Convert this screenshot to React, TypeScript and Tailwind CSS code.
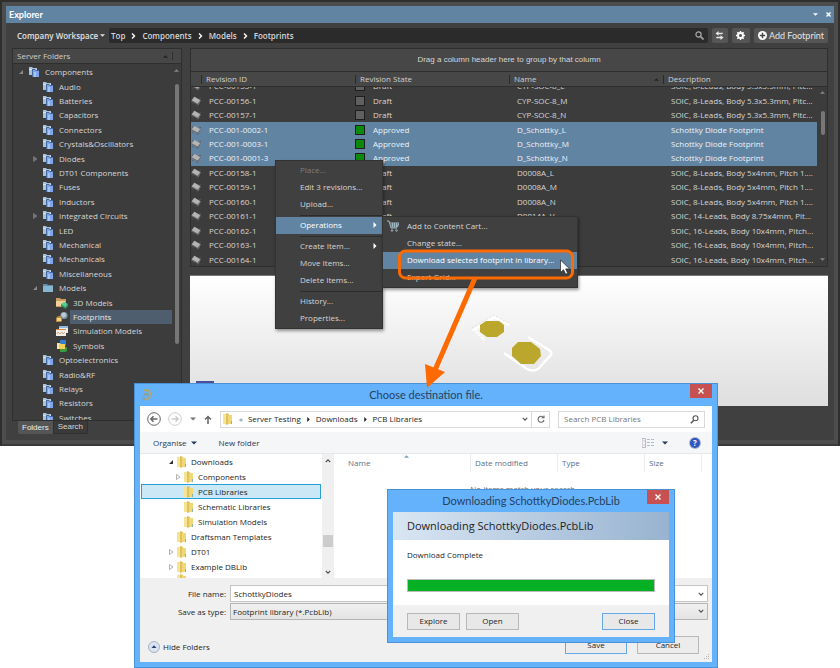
import { useEffect, useRef, useState } from 'react';

type TreeNode = { label: string; level: number; icon: string; arrow?: 'open' | 'closed' };

const serverTree: TreeNode[] = [
  { label: 'Components', level: 0, icon: 'lib', arrow: 'open' },
  { label: 'Audio', level: 1, icon: 'lib' },
  { label: 'Batteries', level: 1, icon: 'lib' },
  { label: 'Capacitors', level: 1, icon: 'lib' },
  { label: 'Connectors', level: 1, icon: 'lib' },
  { label: 'Crystals&Oscillators', level: 1, icon: 'lib' },
  { label: 'Diodes', level: 1, icon: 'lib', arrow: 'closed' },
  { label: 'DT01 Components', level: 1, icon: 'lib' },
  { label: 'Fuses', level: 1, icon: 'lib' },
  { label: 'Inductors', level: 1, icon: 'lib' },
  { label: 'Integrated Circuits', level: 1, icon: 'lib', arrow: 'closed' },
  { label: 'LED', level: 1, icon: 'lib' },
  { label: 'Mechanical', level: 1, icon: 'lib' },
  { label: 'Mechanicals', level: 1, icon: 'lib' },
  { label: 'Miscellaneous', level: 1, icon: 'lib' },
  { label: 'Models', level: 1, icon: 'folder', arrow: 'open' },
  { label: '3D Models', level: 2, icon: 'model3d' },
  { label: 'Footprints', level: 2, icon: 'footprint' },
  { label: 'Simulation Models', level: 2, icon: 'sim' },
  { label: 'Symbols', level: 2, icon: 'symbol' },
  { label: 'Optoelectronics', level: 1, icon: 'lib' },
  { label: 'Radio&RF', level: 1, icon: 'lib' },
  { label: 'Relays', level: 1, icon: 'lib' },
  { label: 'Resistors', level: 1, icon: 'lib' },
  { label: 'Switches', level: 1, icon: 'lib' },
];

const indents = ['pl-1', 'pl-[18px]', 'pl-8'];

const revisions = [
  ['PCC-00155-1', 'Draft', 'CYP-SOC-8_L', 'SOIC, 8-Leads, Body 5.3x5.3mm, Pitc...'],
  ['PCC-00156-1', 'Draft', 'CYP-SOC-8_M', 'SOIC, 8-Leads, Body 5.3x5.3mm, Pitc...'],
  ['PCC-00157-1', 'Draft', 'CYP-SOC-8_N', 'SOIC, 8-Leads, Body 5.3x5.3mm, Pitc...'],
  ['PCC-001-0002-1', 'Approved', 'D_Schottky_L', 'Schottky Diode Footprint'],
  ['PCC-001-0003-1', 'Approved', 'D_Schottky_M', 'Schottky Diode Footprint'],
  ['PCC-001-0001-3', 'Approved', 'D_Schottky_N', 'Schottky Diode Footprint'],
  ['PCC-00158-1', 'Draft', 'D0008A_L', 'SOIC, 8-Leads, Body 5x4mm, Pitch 1....'],
  ['PCC-00159-1', 'Draft', 'D0008A_M', 'SOIC, 8-Leads, Body 5x4mm, Pitch 1....'],
  ['PCC-00160-1', 'Draft', 'D0008A_N', 'SOIC, 8-Leads, Body 5x4mm, Pitch 1....'],
  ['PCC-00161-1', 'Draft', 'D0014A_V', 'SOIC, 14-Leads, Body 8.75x4mm, Pit...'],
  ['PCC-00162-1', 'Draft', 'D0016A_L', 'SOIC, 16-Leads, Body 10x4mm, Pitch...'],
  ['PCC-00163-1', 'Draft', 'D0016A_M', 'SOIC, 16-Leads, Body 10x4mm, Pitch...'],
  ['PCC-00164-1', 'Draft', 'D0016A_N', 'SOIC, 16-Leads, Body 10x4mm, Pitch...'],
];

const diskTree: TreeNode[] = [
  { label: 'Downloads', level: 0, icon: 'win', arrow: 'open' },
  { label: 'Components', level: 1, icon: 'win', arrow: 'closed' },
  { label: 'PCB Libraries', level: 1, icon: 'win' },
  { label: 'Schematic Libraries', level: 1, icon: 'win' },
  { label: 'Simulation Models', level: 1, icon: 'win' },
  { label: 'Draftsman Templates', level: 0, icon: 'win' },
  { label: 'DT01', level: 0, icon: 'win', arrow: 'closed' },
  { label: 'Example DBLib', level: 0, icon: 'win', arrow: 'closed' },
];

function NodeIcon({ name }: { name: string }) {
  if (name === 'lib') {
    return (
      <svg className="w-3 h-3 shrink-0" viewBox="0 0 12 12">
        <path d="M1 1h3l1 1h4v7H1z" fill="#a9c3d9" />
        <path d="M1 3h8v1H1z" fill="#d7e4ee" />
        <path d="M4 3h3l1 1h3v7H4z" fill="#46699f" />
        <path d="M5 4h2l1 1h3v6H5z" fill="#7fa6ea" />
        <path d="M6 6h2v5H6z" fill="#a7c4f7" />
      </svg>
    );
  }
  if (name === 'folder') {
    return (
      <svg className="w-3 h-3 shrink-0" viewBox="0 0 12 12">
        <path d="M1 2h4l1 1h5v7H1z" fill="#5f8fac" />
        <path d="M1 4h10v6H1z" fill="#86b6d0" />
      </svg>
    );
  }
  if (name === 'model3d') {
    return (
      <svg className="w-3 h-3 shrink-0" viewBox="0 0 12 12">
        <path d="M0 1h4l1 1h5v8H0z" fill="#c99d5c" />
        <path d="M0 4h9v5H0z" fill="#f0d19b" />
        <path d="M5 7l3-2 4 2-3 3z" fill="#4fcf93" />
        <path d="M5 7l4 3v2L5 9z" fill="#1f8a58" />
        <path d="M9 10l3-3v2l-3 3z" fill="#2ea86c" />
      </svg>
    );
  }
  if (name === 'footprint') {
    return (
      <svg className="w-3 h-3 shrink-0" viewBox="0 0 12 12">
        <circle cx="8" cy="4.5" r="3.6" fill="#8298a8" />
        <circle cx="7.6" cy="4" r="2.4" fill="#bccad4" />
        <path d="M0 7l2-2h4v5l-1 1H0z" fill="#b28a3d" />
        <path d="M1 7h4v3H1z" fill="#f2d283" />
      </svg>
    );
  }
  if (name === 'sim') {
    return (
      <svg className="w-3 h-3 shrink-0" viewBox="0 0 12 12">
        <path d="M3 1h9v7H3z" fill="#e9eef2" />
        <path d="M3 1h9v2H3z" fill="#8fb9da" />
        <path d="M0 4h10v7H0z" fill="#f4efe6" />
        <path d="M0 4h10v1H0z" fill="#d8873b" />
        <path d="M1 9l1-2 2 2 2-2 1 2 2-2" stroke="#c39a72" strokeWidth=".8" fill="none" />
      </svg>
    );
  }
  if (name === 'symbol') {
    return (
      <svg className="w-3 h-3 shrink-0" viewBox="0 0 12 12">
        <path d="M4 0h6v6H4z" fill="#2f7fd6" />
        <path d="M4 7h7v4l-2 1H4z" fill="#3f9a3b" />
        <path d="M1 3h3l1 1h4v5H1z" fill="#f3cf5e" />
        <path d="M1 3h2v6H1z" fill="#fbe6a0" />
      </svg>
    );
  }
  return (
    <svg className="w-3 h-3 shrink-0" viewBox="0 0 12 12">
      <path d="M1 1h4v10H1z" fill="#f6e393" />
      <path d="M4 0l3 1v10l-3 1z" fill="#dfc25a" />
      <path d="M6 2h4v9H6z" fill="#f0d777" />
      <path d="M9 8h1v3H9z" fill="#8fb3a0" />
    </svg>
  );
}

function ExpandArrow({ arrow, light }: { arrow?: 'open' | 'closed'; light?: boolean }) {
  const stroke = light ? '#a0a0a0' : '#777';
  return (
    <svg className="w-2 h-2 shrink-0" viewBox="0 0 8 8">
      {arrow === 'open' && <path d="M6 2v4H2z" fill={light ? '#333' : '#8a8a8a'} />}
      {arrow === 'closed' && <path d="M2.500 1.500v5L6 4z" fill={light ? '#fff' : '#777'} stroke={stroke} strokeWidth=".8" />}
    </svg>
  );
}

function Triangle({ dir, className }: { dir: 'up' | 'down' | 'right'; className: string }) {
  const d = dir === 'up' ? 'M0 6l4-4 4 4z' : dir === 'down' ? 'M0 2l4 4 4-4z' : 'M2 0l4 4-4 4z';
  return (
    <svg className={className} viewBox="0 0 8 8" fill="currentColor">
      <path d={d} />
    </svg>
  );
}

function Chevron({ className }: { className: string }) {
  return (
    <svg className={className} viewBox="0 0 8 8" fill="none" stroke="currentColor" strokeWidth="1.6">
      <path d="M1 2.500l3 3 3-3" />
    </svg>
  );
}

function ChipIcon() {
  return (
    <svg className="w-[10px] h-[10px]" viewBox="0 0 12 12">
      <path d="M4 1l8 4-3 6-9-5z" fill="#6f6f6f" />
      <path d="M4 1l7 4-3 4-7-4z" fill="#b4b4b4" />
      <path d="M3 1l-1 2M1 8l2 2M10 3l2 0M8 10l-1 2" stroke="#555" />
    </svg>
  );
}

function Explorer() {
  const [activeFolder, setActiveFolder] = useState('Footprints');
  const gridRef = useRef<HTMLDivElement>(null);

  // The grid starts half a row down
  useEffect(() => {
    if (gridRef.current) gridRef.current.scrollTop = 8;
  }, []);

  return (
    <section className="bg-[#4d4d4d] border-2 border-[#2f2f2f] border-b-[#3a3a3a] p-1 text-[8px] leading-3 text-[#d6d6d6]">
      <header className="h-[17px] bg-[#6284a3] flex items-center justify-between px-[3px] text-white">
        <h1 className="text-[9px] font-bold font-[Lato,sans-serif]">Explorer</h1>
        <div className="flex items-center gap-2">
          <button aria-label="Window options"><Triangle dir="down" className="w-[5px] h-[5px]" /></button>
          <button aria-label="Close panel">
            <svg className="w-[5px] h-[5px]" viewBox="0 0 5 5" stroke="white" strokeWidth="1.4"><path d="M.5.5l4 4M4.500.5l-4 4" /></svg>
          </button>
        </div>
      </header>

      <div className="bg-[#404040] px-[6px] pb-[6px]">
        <div className="h-[25px] flex items-center gap-1">
          <button className="w-[93px] pl-[5px] flex items-center gap-[2px] font-semibold text-[#e0e0e0] whitespace-nowrap">
            Company Workspace <Triangle dir="down" className="w-[5px] h-[5px] shrink-0" />
          </button>
          <nav className="flex-1 h-[15px] rounded-xs bg-[#2b2b2b] flex items-center gap-[6px] pl-[2px] pr-1 font-semibold text-[#d6d6d6]">
            <a href="#top">Top</a>
            <Crumb />
            <a href="#components">Components</a>
            <Crumb />
            <a href="#models">Models</a>
            <Crumb />
            <a href="#footprints">Footprints</a>
            <button aria-label="Search" className="ml-auto">
              <svg className="w-[9px] h-[9px]" viewBox="0 0 9 9" fill="none" stroke="#a8a8a8"><circle cx="3.500" cy="3.500" r="2.600" strokeWidth="1.200" /><path d="M5.500 5.500l3 3" strokeWidth="1.700" /></svg>
            </button>
          </nav>
          <button aria-label="Refresh" className="w-4 h-[15px] rounded-xs bg-[#555] flex items-center justify-center">
            <svg className="w-[9px] h-[9px]" viewBox="0 0 9 9" fill="#e8e8e8"><path d="M3.500 0L.5 2.500l3 2.200V3.200h3.700l1-1.500H3.500zM5.500 4.300v1.500H1.800l-1 1.500h4.700V9l3-2.400z" /></svg>
          </button>
          <button aria-label="Settings" className="w-[18px] h-[15px] rounded-xs bg-[#555] flex items-center justify-center">
            <svg className="w-[9px] h-[9px]" viewBox="0 0 10 10" fill="none" stroke="#fff"><circle cx="5" cy="5" r="2.800" strokeWidth="2" /><path d="M5 0v2M5 8v2M0 5h2M8 5h2M1.500 1.500l1.400 1.400M7.100 7.100l1.400 1.400M8.500 1.500L7.100 2.900M2.900 7.100L1.500 8.500" strokeWidth="1.600" /></svg>
          </button>
          <button className="h-[15px] px-1 rounded-xs bg-[#555] flex items-center gap-[2px] text-[#e4e4e4] text-[9px] font-[Lato,sans-serif] whitespace-nowrap">
            <svg className="w-[9px] h-[9px]" viewBox="0 0 10 10"><circle cx="5" cy="5" r="5" fill="#fff" /><path d="M5 2v6M2 5h6" stroke="#444" strokeWidth="1.600" /></svg>
            Add Footprint
          </button>
        </div>

        <div className="flex gap-2">
          <aside className="w-[170px] shrink-0">
            <div className="border border-[#2e2e2e] bg-[#3c3c3c]">
              <div className="h-[15px] bg-[#474747] border-b border-[#2e2e2e] flex items-center px-1 text-[#d0d0d0]">
                Server Folders
                <Triangle dir="up" className="w-[5px] h-[5px] ml-auto text-[#222]" />
                <span className="w-px h-2 bg-[#2e2e2e] ml-1 mr-1" />
              </div>
              <div className="h-[356px] flex overflow-hidden">
                <ul className="flex-1 h-[361px] grid auto-rows-fr pt-px">
                  {serverTree.map((node) => (
                    <li key={node.label} className={`flex items-center ${indents[node.level]}`}>
                      <ExpandArrow arrow={node.arrow} />
                      <span className="w-[3px] shrink-0" />
                      <NodeIcon name={node.icon} />
                      <button
                        onClick={() => setActiveFolder(node.label)}
                        className={`flex-1 h-full ml-[2px] pl-[3px] text-left whitespace-nowrap ${activeFolder === node.label ? 'bg-[#4f5e6f] text-[#e6e6e6]' : ''}`}
                      >
                        {node.label}
                      </button>
                    </li>
                  ))}
                </ul>
                <div className="w-[9px] flex flex-col items-center pt-1">
                  <Triangle dir="up" className="w-[5px] h-[5px] text-[#888]" />
                  <span className="mt-[11px] w-1 h-[260px] rounded-full bg-[#777]" />
                </div>
              </div>
            </div>
            <div className="flex px-[6px] font-['Liberation_Sans',sans-serif]">
              <button className="h-[13px] px-1 bg-[#555] rounded-b-xs text-[#eee] flex items-center">Folders</button>
              <button className="h-[13px] px-1 bg-[#3a3a3a] border border-t-0 border-[#303030] rounded-b-xs flex items-center">Search</button>
            </div>
          </aside>

          <div className="flex-1 min-w-0">
            <div className="border border-[#2e2e2e] bg-[#3c3c3c]">
              <div className="h-[23px] bg-[#474747] border-b border-[#2e2e2e] flex items-center justify-center font-['Liberation_Sans',sans-serif]">
                Drag a column header here to group by that column
              </div>
              <div className="relative">
                <div ref={gridRef} className="h-[194px] overflow-hidden">
                  <table className="w-full h-[203px] table-fixed border-separate border-spacing-0 text-left">
                    <thead className="sticky top-0 z-10">
                      <tr className="h-[15px] bg-[#474747] text-[#d0d0d0]">
                        <th className="w-[10px] p-0 border-b border-[#2e2e2e]" />
                        <HeadCell className="w-[154px]">Revision ID</HeadCell>
                        <HeadCell className="w-[154px]">Revision State</HeadCell>
                        <HeadCell className="w-[154px]" sorted>Name</HeadCell>
                        <HeadCell className="w-auto">Description</HeadCell>
                        <th className="w-[10px] p-0 border-b border-[#2e2e2e] bg-[#474747]" />
                      </tr>
                    </thead>
                    <tbody>
                      {revisions.map(([id, state, name, description]) => {
                        const approved = state === 'Approved';
                        const cell = approved ? 'bg-[#6284a3] text-[#eef3f7]' : '';
                        return (
                          <tr key={id} className="leading-[10px] whitespace-nowrap">
                            <td className={cell}><ChipIcon /></td>
                            <td className={`${cell} pl-2`}>{id}</td>
                            <td className={cell}>
                              <span className="flex items-center gap-2">
                                <span className={`w-[10px] h-[10px] border border-[#1e1e1e] ${approved ? 'bg-[#0a8a0a]' : 'bg-[#606060]'}`} />
                                {state}
                              </span>
                            </td>
                            <td className={`${cell} pl-2`}>{name}</td>
                            <td className={`${cell} pl-2`}>{description}</td>
                            <td />
                          </tr>
                        );
                      })}
                    </tbody>
                  </table>
                </div>
                <div className="absolute right-[2px] top-[18px] bottom-1 flex flex-col items-center">
                  <Triangle dir="up" className="w-[5px] h-[5px] text-[#888]" />
                  <span className="mt-4 w-1 h-6 rounded-full bg-[#777]" />
                  <Triangle dir="down" className="w-[5px] h-[5px] text-[#888] mt-auto" />
                </div>
              </div>
            </div>

            <div className="mt-2 h-[131px] border-t border-[#777] bg-linear-to-b from-white to-[#dedede] overflow-hidden">
              <svg className="w-full h-full" viewBox="0 0 638 130" preserveAspectRatio="xMinYMin meet">
                <path d="M295 64L284 54 304 41 319 49" fill="none" stroke="#fff" strokeWidth="2.500" />
                <path d="M282 52l22-13 14 8M284 55l12 9" fill="none" stroke="#d4d4d4" strokeWidth=".6" strokeDasharray="2 2" />
                <path d="M338 61l21 13q4 3 1 6l-12 13q-5 3-11 0l-23-16" fill="none" stroke="#fff" strokeWidth="2.500" />
                <path d="M296 45h13l5 4v7l-7 5h-10l-7-5v-7z" fill="#bba72b" />
                <path d="M328 66h13l9 7 1 7-7 8h-13l-9-8v-8z" fill="#bba72b" />
                <path d="M6 105h18v3H6z" fill="#4a4f9c" />
              </svg>
            </div>
          </div>
        </div>
      </div>
    </section>
  );
}

function Crumb() {
  return (
    <svg className="w-[5px] h-[6px]" viewBox="0 0 5 6" fill="none" stroke="#fff" strokeWidth="1.400">
      <path d="M1 .5L3.500 3 1 5.500" />
    </svg>
  );
}

function HeadCell({ children, className, sorted }: { children: string; className: string; sorted?: boolean }) {
  return (
    <th className={`${className} p-0 font-normal border-b border-[#2e2e2e] bg-[#474747]`}>
      <div className="flex items-center border-l border-[#2a2a2a] h-[9px] pl-1 pr-1">
        {children}
        {sorted && <Triangle dir="up" className="w-[5px] h-[5px] ml-auto text-[#222]" />}
      </div>
    </th>
  );
}

function MenuItem({ label, active, disabled, submenu, icon }: { label: string; active?: boolean; disabled?: boolean; submenu?: boolean; icon?: boolean }) {
  return (
    <li>
      <button
        disabled={disabled}
        className={`w-full h-[17px] flex items-center pr-1 pb-px text-left whitespace-nowrap ${active ? 'bg-[#6284a3] text-white' : ''} ${disabled ? 'text-[#7d7d7d]' : ''}`}
      >
        <span className="w-6 shrink-0 pl-1">
          {icon && (
            <svg className="w-3 h-3" viewBox="0 0 12 12" fill="none" stroke="#9fb8c4">
              <path d="M0 1h2l2 7h6" />
              <path d="M3 3h9l-1.500 4H4M5.500 3v4M7.500 3v4M9.500 3v4M3.500 5h8" />
              <circle cx="5" cy="10.500" r=".8" /><circle cx="9.500" cy="10.500" r=".8" />
            </svg>
          )}
        </span>
        {label}
        {submenu && <Triangle dir="right" className="w-[6px] h-[6px] ml-auto text-white" />}
      </button>
    </li>
  );
}

function MenuLine() {
  return <li className="h-px ml-6 mt-[2px] mb-px bg-[#2c2c2c]" />;
}

function ContextMenus() {
  return (
    <div className="text-[8px] leading-3 text-[#d6d6d6]">
      <ul className="absolute left-[275px] top-[160px] w-[108px] border border-[#333] bg-[#404040] py-px shadow-[1px_2px_3px_rgba(0,0,0,0.4)]">
        <MenuItem label="Place..." disabled />
        <MenuItem label="Edit 3 revisions..." />
        <MenuItem label="Upload..." />
        <MenuLine />
        <MenuItem label="Operations" active submenu />
        <MenuLine />
        <MenuItem label="Create Item..." submenu />
        <MenuItem label="Move Items..." />
        <MenuItem label="Delete Items..." />
        <MenuLine />
        <MenuItem label="History..." />
        <MenuItem label="Properties..." />
      </ul>
      <ul className="absolute left-[382px] top-[216px] w-[196px] border border-[#333] bg-[#404040] py-px shadow-[1px_2px_3px_rgba(0,0,0,0.4)]">
        <MenuItem label="Add to Content Cart..." icon />
        <MenuItem label="Change state..." />
        <MenuItem label="Download selected footprint in library..." active />
        <MenuItem label="Export Grid..." />
      </ul>
    </div>
  );
}

function CloseButton() {
  return (
    <button aria-label="Close window" className="absolute right-[5px] top-0 w-[22px] h-[14px] bg-[#c75050] flex items-center justify-center">
      <svg className="w-[6px] h-[6px]" viewBox="0 0 6 6" stroke="white" strokeWidth="1.400"><path d="M.5.5l5 5M5.500.5l-5 5" /></svg>
    </button>
  );
}

function SaveDialog() {
  const [fileName, setFileName] = useState('SchottkyDiodes');
  return (
    <section className="absolute left-[134px] top-[383px] w-[584px] border border-[#4a92d8] bg-[#64b1fc] px-[5px] pb-[5px] text-[8px] leading-3 text-[#1e1e1e]">
      <header className="h-[22px] flex items-center">
        <svg className="w-[10px] h-3 ml-[2px]" viewBox="0 0 10 12" fill="none" strokeWidth="1.800">
          <path d="M1.500 1.500l4-.5 3 3-1 4.500-4 2.500" stroke="#b5a66e" />
          <path d="M2 5.500l3-.5 1 2M1 8l1.500 3" stroke="#93a08c" />
        </svg>
        <h2 className="flex-1 pr-3 text-center text-[11px] font-[Lato,sans-serif] text-[#27425c]">Choose destination file.</h2>
        <CloseButton />
      </header>

      <div className="bg-white">
        <div className="h-[26px] flex items-center px-[7px] gap-2">
          <button aria-label="Back">
            <svg className="w-[14px] h-[14px]" viewBox="0 0 14 14" fill="none" stroke="#666"><circle cx="7" cy="7" r="6.300" /><path d="M10.500 7H4M6.500 4.200L3.800 7l2.700 2.800" strokeWidth="1.500" /></svg>
          </button>
          <button aria-label="Forward" className="-ml-px">
            <svg className="w-[14px] h-[14px]" viewBox="0 0 14 14" fill="none" stroke="#ccc"><circle cx="7" cy="7" r="6.300" /><path d="M3.500 7H10M7.500 4.200L10.200 7l-2.700 2.800" strokeWidth="1.500" /></svg>
          </button>
          <button aria-label="Recent locations"><Triangle dir="down" className="w-[6px] h-[6px] text-[#777]" /></button>
          <button aria-label="Up">
            <svg className="w-2 h-[9px]" viewBox="0 0 8 9" fill="none" stroke="#666" strokeWidth="1.500"><path d="M4 9V1.500M1 4.500l3-3 3 3" /></svg>
          </button>
          <div className="flex-1 h-[17px] border border-[#d9d9d9] flex items-center pl-px gap-[5px]">
            <NodeIcon name="win" />
            <span className="text-[#666]">«</span>
            <a href="#server-testing">Server Testing</a>
            <Triangle dir="right" className="w-[5px] h-[5px]" />
            <a href="#downloads">Downloads</a>
            <Triangle dir="right" className="w-[5px] h-[5px]" />
            <a href="#pcb-libraries">PCB Libraries</a>
            <button aria-label="Previous locations" className="ml-auto"><Chevron className="w-[6px] h-[6px] text-[#555]" /></button>
            <button aria-label="Reload" className="-ml-[2px] w-[18px] h-full border-l border-[#d9d9d9] flex items-center justify-center">
              <svg className="w-2 h-2" viewBox="0 0 8 8" fill="none" stroke="#666" strokeWidth="1.100"><path d="M6.500 2.500A3 3 0 1 0 7 5M7 .5v2.300H4.600" /></svg>
            </button>
          </div>
          <div className="w-[147px] h-[17px] border border-[#d9d9d9] flex items-center px-[5px]">
            <input aria-label="Search PCB Libraries" placeholder="Search PCB Libraries" className="flex-1 min-w-0 outline-none placeholder:text-[#777]" />
            <svg className="w-[9px] h-[9px]" viewBox="0 0 9 9" fill="none" stroke="#555"><circle cx="5.500" cy="3.300" r="2.500" strokeWidth="1.100" /><path d="M3.800 5.200L.8 8.300" strokeWidth="1.500" /></svg>
          </div>
        </div>

        <div className="h-[22px] bg-[#f5f6f7] border-b border-[#e8e8e8] flex items-center pl-[13px] pr-3 text-[#1e395b]">
          <button className="flex items-center gap-1">Organise <Triangle dir="down" className="w-[6px] h-[6px]" /></button>
          <button className="ml-[22px]">New folder</button>
          <button aria-label="Change view" className="ml-auto flex items-center gap-2">
            <svg className="w-3 h-[10px]" viewBox="0 0 12 10" fill="none" stroke="#a3acb7" strokeWidth=".8"><path d="M0 .5h3.500v9H0zM5 1.500h3M5 4.500h3M5 7.500h3M9 1.500h3M9 4.500h3M9 7.500h3" /><path d="M1.500 3h1M1.500 7h1" stroke="#d97b6a" /></svg>
            <Triangle dir="down" className="w-[6px] h-[6px]" />
          </button>
          <button aria-label="Help" className="ml-[22px] w-[10px] h-[10px] rounded-full bg-[#2f55c4] ring-1 ring-[#a9b4c4] text-white font-bold leading-[10px]">?</button>
        </div>

        <div className="h-[124px] flex overflow-hidden">
          <div className="w-[182px] px-px">
            <ul>
              {diskTree.map((node) => (
                <li
                  key={node.label}
                  className={`h-[15px] flex items-center gap-px ${node.level === 0 ? 'pl-[26px]' : 'pl-[33px]'} ${node.label === 'PCB Libraries' ? 'bg-[#cbe8f6] outline outline-[#26a0da] -outline-offset-1' : ''}`}
                >
                  <ExpandArrow arrow={node.arrow} light />
                  <NodeIcon name="win" />
                  <button className="pl-[2px] whitespace-nowrap">{node.label}</button>
                </li>
              ))}
              <li className="pl-[35px]"><NodeIcon name="win" /></li>
            </ul>
          </div>
          <div className="w-3 bg-[#f0f0f0] flex flex-col items-center justify-between pt-1 pb-[3px] text-[#505050]">
            <Chevron className="w-[6px] h-[6px] rotate-180" />
            <span className="mt-12 w-[10px] h-3 bg-[#cdcdcd]" />
            <Chevron className="w-[6px] h-[6px]" />
          </div>
          <div className="flex-1 pr-[10px] relative">
            <Triangle dir="up" className="absolute left-[70px] top-0 w-[5px] h-[5px] text-[#6fa3c0]" />
            <table className="w-full table-fixed text-left text-[#5a6f8c]">
              <thead>
                <tr className="h-[18px]">
                  <th className="p-0 pl-[14px] font-normal border-r border-[#e9edf2]">Name</th>
                  <th className="w-[87px] p-0 pl-1 font-normal border-r border-[#e9edf2]">Date modified</th>
                  <th className="w-[87px] p-0 pl-1 font-normal border-r border-[#e9edf2]">Type</th>
                  <th className="w-[57px] p-0 pl-1 font-normal border-r border-[#e9edf2]">Size</th>
                </tr>
              </thead>
              <tbody>
                <tr>
                  <td colSpan={4} className="pt-[11px] pl-3 text-center text-[#6d6d6d]">No items match your search.</td>
                </tr>
              </tbody>
            </table>
          </div>
        </div>
      </div>

      <footer className="relative bg-[#f0f0f0] pt-[7px] pb-2 pr-1">
        <div className="flex items-center">
          <label htmlFor="file-name" className="w-[90px] pr-1 text-right">File name:</label>
          <div className="flex-1 h-[17px] flex items-center border border-[#c4c4c4] bg-white px-[3px]">
            <input id="file-name" value={fileName} onChange={(e) => setFileName(e.target.value)} className="flex-1 outline-none" />
            <button aria-label="Show names"><Chevron className="w-[6px] h-[6px] text-[#555]" /></button>
          </div>
        </div>
        <div className="mt-px flex items-center">
          <label htmlFor="save-type" className="w-[90px] pr-1 text-right">Save as type:</label>
          <div className="flex-1 relative">
            <select id="save-type" className="block w-full h-[17px] appearance-none border border-[#b5b5b5] bg-linear-to-b from-[#f0f0f0] to-[#e4e4e4] pl-[2px]">
              <option>Footprint library (*.PcbLib)</option>
            </select>
            <Chevron className="absolute right-1 top-[5px] w-[6px] h-[6px] text-[#555] pointer-events-none" />
          </div>
        </div>
        <div className="mt-4 h-[18px] flex items-center gap-[10px] pl-2 pr-[9px]">
          <button className="mr-auto mt-1 flex items-center gap-[3px]">
            <svg className="w-3 h-3" viewBox="0 0 12 12"><circle cx="6" cy="6" r="5.500" fill="#dbe3ee" stroke="#a5b2c6" /><path d="M3.500 7L6 4.300 8.500 7z" fill="#24407a" /></svg>
            Hide Folders
          </button>
          <button className="w-[62px] h-[18px] border border-[#64a8e8] bg-[#ececec]">Save</button>
          <button className="w-[62px] h-[18px] border border-[#b8b8b8] bg-[#ececec]">Cancel</button>
        </div>
        <svg className="absolute right-[2px] bottom-[2px] w-[6px] h-[6px]" viewBox="0 0 6 6" fill="#b5b5b5"><path d="M4 0h1v1H4zM2 2h1v1H2zM4 2h1v1H4zM0 4h1v1H0zM2 4h1v1H2zM4 4h1v1H4z" /></svg>
      </footer>
    </section>
  );
}

function DownloadDialog() {
  return (
    <section className="absolute left-[387px] top-[489px] w-[288px] border border-[#4a92d8] bg-[#64b1fc] px-[5px] pb-[5px] text-[8px] leading-3 text-[#1e1e1e]">
      <header className="h-[22px] flex items-center justify-center">
        <h2 className="text-[11px] font-[Lato,sans-serif] text-[#27425c]">Downloading SchottkyDiodes.PcbLib</h2>
        <CloseButton />
      </header>
      <div className="h-7 flex items-center px-[14px] bg-linear-to-r from-[#d9e6f3] to-[#98b3d0] text-[11px]">
        Downloading SchottkyDiodes.PcbLib
      </div>
      <div className="bg-white px-[14px] pt-[9px] pb-[13px]">
        <p>Download Complete</p>
        <div role="progressbar" aria-label="Download" aria-valuenow={100} className="mt-[18px] h-[13px] border border-[#bcbcbc] bg-[#06b025]" />
      </div>
      <footer className="h-8 bg-[#f0f0f0] flex items-center gap-[6px] px-[14px]">
        <button className="w-[53px] h-[17px] border border-[#b8b8b8] bg-[#e8e8e8]">Explore</button>
        <button className="w-[53px] h-[17px] border border-[#b8b8b8] bg-[#e8e8e8]">Open</button>
        <button className="ml-auto w-[53px] h-[17px] border border-[#64a8e8] bg-[#e8e8e8]">Close</button>
      </footer>
    </section>
  );
}

// Highlight round the menu entry, arrow to the dialog and the mouse pointer
function Callout() {
  return (
    <svg className="absolute left-[396px] top-[246px] w-[184px] h-[144px] pointer-events-none" viewBox="0 0 184 144">
      <rect x="3.500" y="5" width="173" height="27" rx="6" fill="none" stroke="#ff6a00" strokeWidth="3" />
      <path d="M79 32L39 124" stroke="#ff6a00" strokeWidth="5" />
      <path d="M29 118l20 8-18 16z" fill="#ff6a00" />
      <path d="M164.500 14v12.500l3-2.800 2.200 4.500 2-1-2-4.300h4z" fill="#fff" stroke="#222" strokeWidth=".7" />
    </svg>
  );
}

export default function App() {
  return (
    <main className="relative min-h-screen overflow-hidden bg-white font-['Open_Sans','Noto_Sans',sans-serif]">
      <Explorer />
      <ContextMenus />
      <SaveDialog />
      <DownloadDialog />
      <Callout />
    </main>
  );
}
